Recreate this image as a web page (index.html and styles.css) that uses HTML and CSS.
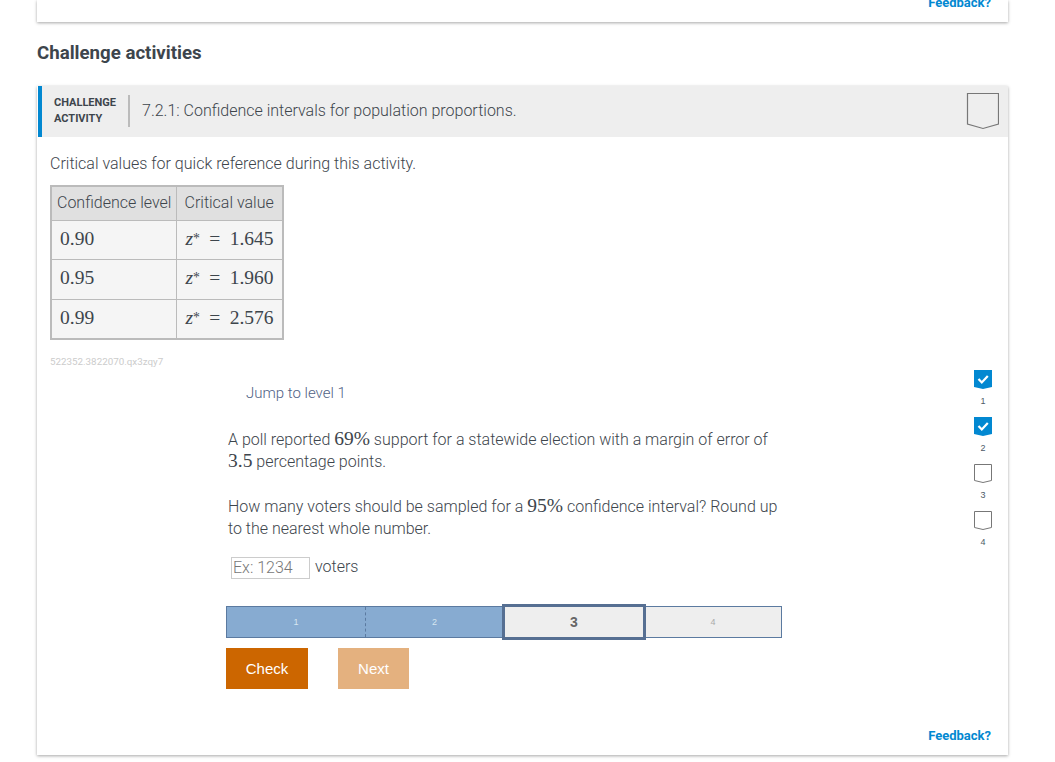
FILE: index.html
```html
<!DOCTYPE html>
<html lang="en">
<head>
    <meta charset="UTF-8">
    <title>Challenge activities</title>
    <link rel="stylesheet" href="styles.css">
</head>
<body>
    <div class="card top-card">
        <a class="feedback" href="#">Feedback?</a>
    </div>

    <h2 class="section-title">Challenge activities</h2>

    <section class="card activity">
        <header class="activity-header">
            <div class="activity-type">CHALLENGE<br>ACTIVITY</div>
            <div class="activity-title">7.2.1: Confidence intervals for population proportions.</div>
            <svg class="chevron-big" width="33" height="37" viewBox="0 0 33 37">
                <path d="M1.500 0.500H32.500V31L17 35.500L1.500 31Z" fill="none" stroke="#777" stroke-width="1.200"/>
            </svg>
        </header>

        <div class="activity-body">
            <p class="intro">Critical values for quick reference during this activity.</p>
            <table class="critical-table">
                <tr><th>Confidence level</th><th>Critical value</th></tr>
                <tr><td><span class="math">0.90</span></td><td><span class="math eq"><i>z</i><sup>*</sup> = 1.645</span></td></tr>
                <tr><td><span class="math">0.95</span></td><td><span class="math eq"><i>z</i><sup>*</sup> = 1.960</span></td></tr>
                <tr><td><span class="math">0.99</span></td><td><span class="math eq"><i>z</i><sup>*</sup> = 2.576</span></td></tr>
            </table>
            <div class="activity-id">522352.3822070.qx3zqy7</div>

            <div class="level-row">
                <div class="question">
                    <div class="jump">Jump to level 1</div>
                    <p class="q-text">A poll reported <span class="math">69%</span> support for a statewide election with a margin of error of <span class="math">3.5</span> percentage points.</p>
                    <p class="q-text">How many voters should be sampled for a <span class="math">95%</span> confidence interval? Round up to the nearest whole number.</p>
                    <div class="answer">
                        <input class="answer-input" type="text" placeholder="Ex: 1234">
                        <span>voters</span>
                    </div>
                    <div class="progress">
                        <div class="step done split">1</div>
                        <div class="step done">2</div>
                        <div class="step current">3</div>
                        <div class="step">4</div>
                    </div>
                    <div class="actions">
                        <button class="btn check">Check</button>
                        <button class="btn next">Next</button>
                    </div>
                </div>

                <div class="levels">
                    <div class="level">
                        <svg width="18" height="19" viewBox="0 0 18 19"><path d="M0 0H18V17L9 19L0 17Z" fill="#0288d1"/><path d="M4.500 9L7.800 12.500L13.800 6" fill="none" stroke="#fff" stroke-width="2.200"/></svg>
                        <span class="level-num">1</span>
                    </div>
                    <div class="level">
                        <svg width="18" height="19" viewBox="0 0 18 19"><path d="M0 0H18V17L9 19L0 17Z" fill="#0288d1"/><path d="M4.500 9L7.800 12.500L13.800 6" fill="none" stroke="#fff" stroke-width="2.200"/></svg>
                        <span class="level-num">2</span>
                    </div>
                    <div class="level">
                        <svg width="18" height="19" viewBox="0 0 18 19"><path d="M0.500 0.500H17.500V16.500L9 18.500L0.500 16.500Z" fill="none" stroke="#777"/></svg>
                        <span class="level-num">3</span>
                    </div>
                    <div class="level">
                        <svg width="18" height="19" viewBox="0 0 18 19"><path d="M0.500 0.500H17.500V16.500L9 18.500L0.500 16.500Z" fill="none" stroke="#777"/></svg>
                        <span class="level-num">4</span>
                    </div>
                </div>
            </div>

            <div class="bottom-link">
                <a class="feedback" href="#">Feedback?</a>
            </div>
        </div>
    </section>
</body>
</html>
```

FILE: styles.css
```css
* {
    margin: 0;
    padding: 0;
    box-sizing: border-box;
}

body {
    font-family: Roboto, "Liberation Sans", sans-serif;
    font-weight: 300;
    background-color: #fff;
    color: #3d454c;
    padding: 0 47px 7px 37px;
    min-height: 762px;
}

.card {
    background-color: #fff;
    box-shadow: 0 1px 3px rgba(0, 0, 0, 0.35);
}

.top-card {
    height: 22px;
    overflow: hidden;
    display: flex;
    justify-content: flex-end;
    align-items: flex-start;
    padding-right: 17px;
}

.top-card .feedback {
    margin-top: -6px;
}

.feedback {
    font-size: 13px;
    line-height: 18px;
    font-weight: 700;
    color: #0288d1;
    text-decoration: none;
}

.section-title {
    font-size: 18.670px;
    line-height: 28px;
    font-weight: 700;
    color: #3d454c;
    margin-top: 17px;
    margin-bottom: 19px;
}

.activity {
    height: 669px;
}

.activity-header {
    height: 51px;
    background-color: #eee;
    display: flex;
    align-items: center;
    margin-left: 1px;
    border-left: 4px solid #0288d1;
    padding-left: 12px;
    padding-right: 9px;
}

.activity-type {
    font-size: 11px;
    line-height: 16px;
    font-weight: 700;
    color: #3d454c;
    height: 32px;
    width: 76px;
    border-right: 2px solid #bbb;
    margin-bottom: 2px;
}

.activity-title {
    flex: 1;
    font-size: 16px;
    margin-left: 12px;
    margin-bottom: 2px;
}

.activity-body {
    padding: 0 0 0 13px;
}

.intro {
    font-size: 16px;
    line-height: 22px;
    margin-top: 16px;
    margin-bottom: 10px;
}

.math {
    font-family: "Liberation Serif", "DejaVu Serif", serif;
    font-weight: 400;
    font-size: 1.220em;
    line-height: 0;
}

.math sup {
    font-size: 0.7em;
    line-height: 0;
    vertical-align: 0.15em;
}

.eq {
    word-spacing: 4.500px;
}

.critical-table {
    border-collapse: collapse;
    border: 2px solid #bbb;
    background-color: #f5f5f5;
    width: 234px;
    table-layout: fixed;
}

.critical-table th {
    background-color: #e0e0e0;
    font-weight: 300;
    font-size: 16px;
    height: 34px;
    border: 1px solid #bbb;
    text-align: left;
    padding: 0 0 2px 5px;
}

.critical-table th:first-child {
    width: 125px;
}

.critical-table th + th {
    padding-left: 8px;
}

.critical-table td {
    font-size: 16px;
    height: 39.500px;
    border: 1px solid #bbb;
    padding: 0 8px 1px;
}

.critical-table td + td {
    padding-left: 9px;
    padding-right: 0;
}

.activity-id {
    font-size: 9.800px;
    line-height: 12px;
    color: #ccc;
    font-weight: 400;
    margin-top: 16px;
}

.level-row {
    display: flex;
    margin-top: 14px;
}

.question {
    width: 556px;
    margin-left: 176px;
}

.jump {
    font-size: 15px;
    line-height: 22px;
    color: #4f6285;
    font-weight: 300;
    margin-left: 20px;
}

.q-text {
    font-size: 16px;
    line-height: 22.500px;
    width: 552px;
    margin-left: 2px;
    margin-bottom: 22px;
}

.jump + .q-text {
    margin-top: 25px;
    margin-bottom: 22px;
}

.answer {
    display: flex;
    align-items: flex-start;
    font-size: 16px;
    margin-top: -6px;
    margin-left: 5px;
    gap: 5px;
    line-height: 20px;
}

.answer-input {
    width: 79px;
    height: 22px;
    border: 1px solid #ccc;
    font-family: Roboto, "Liberation Sans", sans-serif;
    font-size: 16px;
    font-weight: 300;
    padding: 0 1px;
}

.answer-input::placeholder {
    color: #777;
    opacity: 1;
}

.progress {
    display: grid;
    grid-template-columns: 139px 137px 142px 136px;
    height: 32px;
    margin-top: 27px;
    border: 1px solid #5b7aa0;
}

.step {
    background-color: #eee;
    color: #aaa;
    font-family: "Liberation Sans", sans-serif;
    font-size: 9px;
    font-weight: 400;
    display: flex;
    align-items: center;
    justify-content: center;
}

.step.done {
    background-color: #87abd1;
    color: #d6e6f0;
}

.step.split {
    border-right: 1px dashed #5b7aa0;
}

.step.current {
    margin: -3px -1px;
    border: 3px solid #566f92;
    color: #666;
    font-size: 14px;
    font-weight: 700;
    z-index: 1;
}

.actions {
    display: flex;
    gap: 30px;
    margin-top: 10px;
}

.btn {
    height: 41px;
    border: none;
    color: #fff;
    font-family: "Liberation Sans", sans-serif;
    font-size: 15px;
}

.check {
    width: 82px;
    background-color: #cc6600;
}

.next {
    width: 71px;
    background-color: #e4b17f;
}

.levels {
    display: flex;
    flex-direction: column;
    margin-left: 192px;
    margin-top: -12px;
}

.level {
    display: flex;
    flex-direction: column;
    align-items: center;
    width: 18px;
    height: 47px;
}

.level-num {
    font-family: "Liberation Sans", sans-serif;
    font-size: 9px;
    line-height: 12px;
    font-weight: 400;
    margin-top: 6px;
    color: #4d5a68;
}

.bottom-link {
    display: flex;
    justify-content: flex-end;
    padding-right: 17px;
    margin-top: 38px;
}
```
